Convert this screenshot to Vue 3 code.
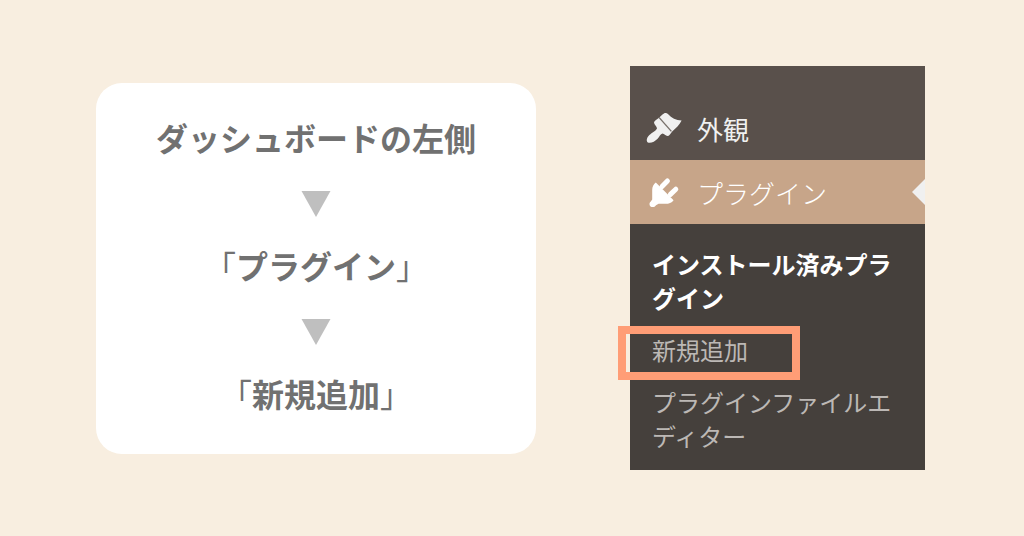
<script setup>
const steps = [
  { text: 'ダッシュボードの左側', quoted: false },
  { text: 'プラグイン', quoted: true },
  { text: '新規追加', quoted: true },
]
const submenu = [
  { label: 'インストール済みプラグイン', current: true },
  { label: '新規追加', marked: true },
  { label: 'プラグインファイルエディター' },
]
</script>

<template>
  <main class="page">
    <ol class="card">
      <li v-for="(step, i) in steps" :key="step.text" class="step">
        <svg v-if="i > 0" class="arrow" viewBox="0 0 30 26" aria-hidden="true">
          <path d="M0.5 0H29.5L15 26Z" fill="#bfbfbf" />
        </svg>
        <p class="line"><span v-if="step.quoted" class="quote">「</span>{{ step.text }}<span v-if="step.quoted" class="quote">」</span></p>
      </li>
    </ol>

    <nav class="panel">
      <a href="#" class="item">
        <svg class="icon" viewBox="0 0 36 36" aria-hidden="true">
          <path d="M18 3.4C19.6 2.8 21 3.2 22.2 4.2C25.4 8 30 10.2 35.6 10.4C33.8 14.6 29.6 18.4 26.2 21.4C24.6 23.4 23.4 26 21.4 26C19.6 25.6 18.2 23.6 16.6 23.4C14.4 24 13.4 26.6 11.6 28.8C8.8 31.6 5 33.6 1.8 32.6C-0.2 31 0.8 27.4 3.4 25C6 22.4 10 20.8 11 18.4C11 16.4 8 14.4 8 12.4C8.4 10.4 10.6 9.8 12.4 8.2C14.4 6.6 15.8 4.4 18 3.4Z" fill="#f0f0f0" />
          <path d="M13 7.4L25.4 21.4" stroke="#77706b" stroke-width="1.4" fill="none" />
        </svg>
        <span>外観</span>
      </a>
      <a href="#" class="item active">
        <svg class="icon" viewBox="0 0 36 36" aria-hidden="true">
          <path d="M9.8 8.6L27.6 26.2C25.8 28.8 22.6 29.8 19.8 29.8H12.6L10 31.2C9 33 6.2 33.8 4.5 32.4C3 31 3.2 28.8 4.8 27.6L6.2 25.4V16C6.2 13.2 7.4 10.2 9.8 8.6Z" fill="#fff" />
          <path d="M16 12.4L21.4 7M24.4 20.4L29.8 15.2" stroke="#fff" stroke-width="5" stroke-linecap="round" />
        </svg>
        <span>プラグイン</span>
      </a>
      <ul class="submenu">
        <li v-for="entry in submenu" :key="entry.label" :class="{ current: entry.current, marked: entry.marked }">
          <a href="#">{{ entry.label }}</a>
        </li>
      </ul>
    </nav>
  </main>
</template>

<style>
body {
  margin: 0;
  background: #f8eee0;
}
</style>

<style scoped>
.page {
  box-sizing: border-box;
  min-height: 100vh;
  padding: 24px 99px 24px 96px;
  display: grid;
  grid-template-columns: 440fr 295fr;
  column-gap: 94px;
  align-items: center;
  background: #f8eee0;
  font-family: "Noto Sans CJK JP", sans-serif;
}
.card,
.submenu {
  list-style: none;
  margin: 0;
}
.card {
  padding: 22px 24px 29px;
  border-radius: 26px;
  background: #fff;
  color: #717171;
  font-size: 32px;
  font-weight: 700;
  line-height: 64px;
  text-align: center;
}
.line {
  margin: 0;
}
.quote {
  font-weight: 400;
}
.arrow {
  display: block;
  width: 30px;
  height: 26px;
  margin: 0 auto;
  padding: 22px 0 16px;
}
.panel {
  background: #59504b;
  padding-top: 30px;
}
.panel a {
  color: inherit;
  text-decoration: none;
}
.panel .item {
  position: relative;
  display: flex;
  align-items: center;
  gap: 15px;
  height: 64px;
  padding-left: 16px;
  color: #f0f0f0;
  font-size: 26px;
}
.panel .active {
  background: #c7a589;
  color: #fff;
  font-weight: 300;
}
.active::after {
  content: "";
  position: absolute;
  right: 0;
  top: 50%;
  margin-top: -13px;
  border: 13px solid transparent;
  border-left-width: 0;
  border-right-color: #f0f0f0;
}
.icon {
  flex: none;
  width: 36px;
  height: 36px;
}
.submenu {
  padding: 23px 22px 17px;
  background: #45403c;
  color: #bcb8b5;
  font-size: 24px;
  font-weight: 400;
  line-height: 34px;
}
.submenu li {
  margin-bottom: 18px;
}
.submenu li:last-child {
  margin-bottom: 0;
}
.submenu .current {
  color: #fff;
  font-weight: 700;
}
.marked {
  position: relative;
}
.marked::after {
  content: "";
  position: absolute;
  inset: -7px 103px -13px -34px;
  border: 8px solid #ff9d76;
  pointer-events: none;
}
</style>
